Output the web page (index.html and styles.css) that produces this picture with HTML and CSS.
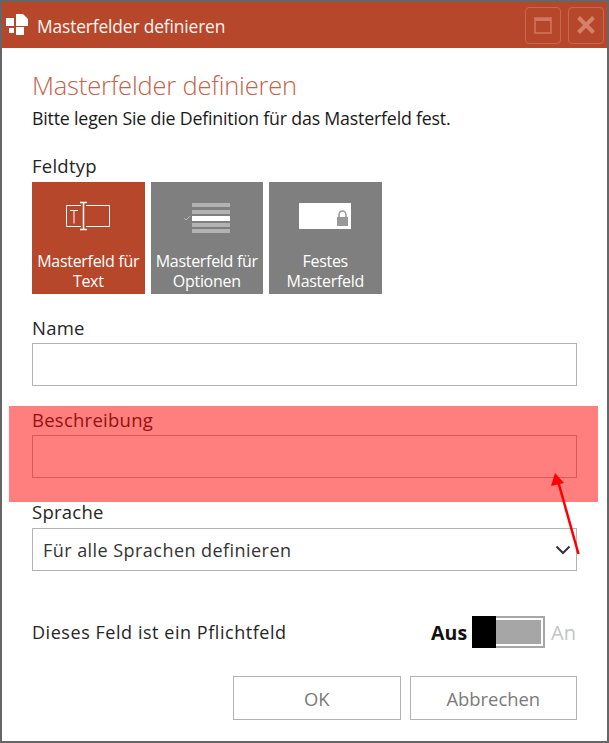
FILE: index.html
```html
<!DOCTYPE html>
<html lang="de">
<head>
<meta charset="utf-8">
<title>Masterfelder definieren</title>
<link rel="stylesheet" href="styles.css">
</head>
<body>
<div class="window">
  <header class="titlebar">
    <svg class="logo" width="24" height="24" viewBox="0 0 24 24">
      <path class="logo-a" d="M10 1h7l5 5v7h-12z"/>
      <rect class="logo-a" x="10" y="14" width="8" height="8"/>
      <rect class="logo-a" x="0" y="5" width="8" height="8"/>
      <rect class="logo-a" x="3" y="15" width="5" height="5"/>
    </svg>
    <span class="title">Masterfelder definieren</span>
    <div class="controls">
      <div class="ctl"><svg width="22" height="22" viewBox="0 0 22 22"><rect class="ctl-line" x="3" y="4" width="16" height="15"/><rect class="ctl-fill" x="3" y="4" width="16" height="3"/></svg></div>
      <div class="ctl"><svg width="22" height="22" viewBox="0 0 22 22"><path class="ctl-x" d="M3.500 3.500L18.500 18.500M18.500 3.500L3.500 18.500"/></svg></div>
    </div>
  </header>
  <main class="body">
    <h1 class="heading">Masterfelder definieren</h1>
    <p class="intro">Bitte legen Sie die Definition für das Masterfeld fest.</p>

    <div class="label label-type">Feldtyp</div>
    <div class="tiles">
      <div class="tile tile-active">
        <svg class="tile-icon" width="113" height="60" viewBox="0 0 113 60">
          <path class="ln" d="M49 23.500H34.500V44.500H49M54 23.500H77.500V44.500H54"/>
          <path class="ln" d="M38 28.500h8M42 28.500v13"/>
          <path class="ln2" d="M51.500 21v26M48 20.500h7M48 47.500h7"/>
        </svg>
        <span class="tile-text">Masterfeld für<br>Text</span>
      </div>
      <div class="tile">
        <svg class="tile-icon" width="113" height="60" viewBox="0 0 113 60">
          <path class="chk" d="M34 36l2 2 4-4"/>
          <rect class="bar" x="42" y="21" width="38" height="4"/>
          <rect class="bar" x="42" y="28" width="38" height="4"/>
          <rect class="bar-on" x="42" y="34" width="38" height="5"/>
          <rect class="bar" x="42" y="41" width="38" height="4"/>
          <rect class="bar" x="42" y="47" width="38" height="4"/>
        </svg>
        <span class="tile-text">Masterfeld für<br>Optionen</span>
      </div>
      <div class="tile">
        <svg class="tile-icon" width="113" height="60" viewBox="0 0 113 60">
          <rect class="bar-on" x="30" y="21" width="52" height="26"/>
          <rect class="lock" x="68" y="35" width="11" height="9"/>
          <path class="shackle" d="M70 35.500v-3a3.500 3.500 0 0 1 7 0v3"/>
        </svg>
        <span class="tile-text">Festes<br>Masterfeld</span>
      </div>
    </div>

    <div class="label label-gap">Name</div>
    <div class="field field-close"></div>

    <div class="label label-gap">Beschreibung</div>
    <div class="field field-close"></div>

    <div class="label label-gap">Sprache</div>
    <div class="field select">
      <span>Für alle Sprachen definieren</span>
      <svg width="16" height="10" viewBox="0 0 16 10"><path class="chev" d="M1.500 1.500L8 8l6.500-6.500"/></svg>
    </div>

    <div class="toggle-row">
      <span class="toggle-label">Dieses Feld ist ein Pflichtfeld</span>
      <span class="off">Aus</span>
      <div class="switch"><div class="knob"></div><div class="track"></div></div>
      <span class="on">An</span>
    </div>

    <div class="actions">
      <div class="btn">OK</div>
      <div class="btn">Abbrechen</div>
    </div>
  </main>
</div>
<div class="highlight"></div>
<svg class="arrow" width="40" height="90" viewBox="0 0 40 90">
  <path class="arrow-line" d="M30.500 81L10 8"/>
  <path class="arrow-head" d="M7 0L3 13L16 10z"/>
</svg>
</body>
</html>
```
FILE: styles.css
```css
* { box-sizing: border-box; }
html, body { margin: 0; padding: 0; }
body {
  width: 609px;
  height: 743px;
  position: relative;
  overflow: hidden;
  font-family: "Open Sans", "Noto Sans", sans-serif;
  background: #fff;
  color: #262626;
}
.window {
  width: 609px;
  height: 743px;
  border: 2px solid #666;
  display: flex;
  flex-direction: column;
  background: #fff;
}
.titlebar {
  height: 46px;
  flex: none;
  background: #b7472a;
  display: flex;
  align-items: center;
  padding: 0 3px 0 4px;
  color: #fff;
}
.logo { flex: none; margin-right: 7px; }
.logo-a { fill: #fff; }
.title { font-size: 17.400px; letter-spacing: -0.15px; opacity: .95; margin-top: 2px; }
.controls { margin-left: auto; display: flex; gap: 7px; }
.ctl {
  width: 36px;
  height: 37px;
  border: 1.500px solid #c8674d;
  border-radius: 4px;
  display: flex;
  align-items: center;
  justify-content: center;
}
.ctl-line { fill: none; stroke: #cf7860; stroke-width: 1.500; }
.ctl-fill { fill: #cf7860; }
.ctl-x { fill: none; stroke: #d5806a; stroke-width: 4; }
.body { flex: 1; padding: 0 30px; display: flex; flex-direction: column; }
.heading {
  margin: 20px 0 0;
  font-size: 25.500px;
  line-height: 34px;
  font-weight: 300;
  color: #c2634a;
  letter-spacing: -0.2px;
}
.intro { margin: 5px 0 0; font-size: 17.800px; line-height: 22px; color: #1a1a1a; letter-spacing: -0.2px; white-space: nowrap; }
.label { font-size: 18.500px; line-height: 22px; color: #262626; letter-spacing: 0.25px; }
.label-type { margin-top: 26px; }
.label-gap { margin-top: 23px; }
.tiles { display: flex; gap: 6px; margin-top: 5px; }
.tile {
  width: 112.500px;
  height: 112px;
  background: #7f7f7f;
  color: #fff;
  display: flex;
  flex-direction: column;
  align-items: center;
}
.tile-active { background: #b7472a; }
.tile-icon { flex: none; display: block; }
.tile-text { margin-top: 9px; font-size: 16px; line-height: 20px; text-align: center; letter-spacing: -0.3px; white-space: nowrap; }
.ln { fill: none; stroke: #fff; stroke-width: 1; }
.ln2 { fill: none; stroke: #fff; stroke-width: 1.500; }
.chk { fill: none; stroke: #b5b5b5; stroke-width: 1; }
.bar { fill: #b2b2b2; }
.bar-on { fill: #fff; }
.lock { fill: #999; }
.shackle { fill: none; stroke: #999; stroke-width: 1.500; }
.field {
  height: 43px;
  margin-top: 5px;
  border: 1.500px solid #b3b3b3;
  background: #fff;
  flex: none;
  width: 545px;
}
.field-close { margin-top: 4px; }
.select {
  display: flex;
  align-items: center;
  justify-content: space-between;
  padding: 0 5px 0 10px;
  font-size: 18px;
  color: #333;
  letter-spacing: 0.45px;
}
.chev { fill: none; stroke: #333; stroke-width: 2; }
.toggle-row { display: flex; align-items: center; margin-top: 45px; height: 32px; width: 545px; }
.toggle-label { font-size: 18px; color: #262626; letter-spacing: 0.55px; margin-right: auto; white-space: nowrap; }
.off { font-size: 19.500px; font-weight: 700; color: #111; margin-right: 5px; }
.switch {
  width: 73px;
  height: 32px;
  border: 2px solid #a6a6a6;
  position: relative;
  display: flex;
  align-items: stretch;
  padding: 2px 2px 2px 0;
}
.knob { width: 24px; margin: -4px 0 -4px -2px; background: #000; flex: none; }
.track { flex: 1; background: #a6a6a6; }
.on { font-size: 20px; color: #c4c4c4; margin-left: 6px; margin-right: 1px; }
.actions { display: flex; justify-content: flex-end; gap: 9px; margin-top: 28px; width: 545px; }
.btn {
  height: 44px;
  width: 167.500px;
  border: 1.500px solid #b3b3b3;
  display: flex;
  align-items: center;
  justify-content: center;
  font-size: 18.400px;
  color: #7a7a7a;
}
.highlight {
  position: absolute;
  left: 9px;
  top: 406px;
  width: 589px;
  height: 96px;
  background: rgba(255, 0, 0, .5);
}
.arrow { position: absolute; left: 548px; top: 473px; }
.arrow-line { fill: none; stroke: #f00; stroke-width: 2.500; }
.arrow-head { fill: #f00; }
```
